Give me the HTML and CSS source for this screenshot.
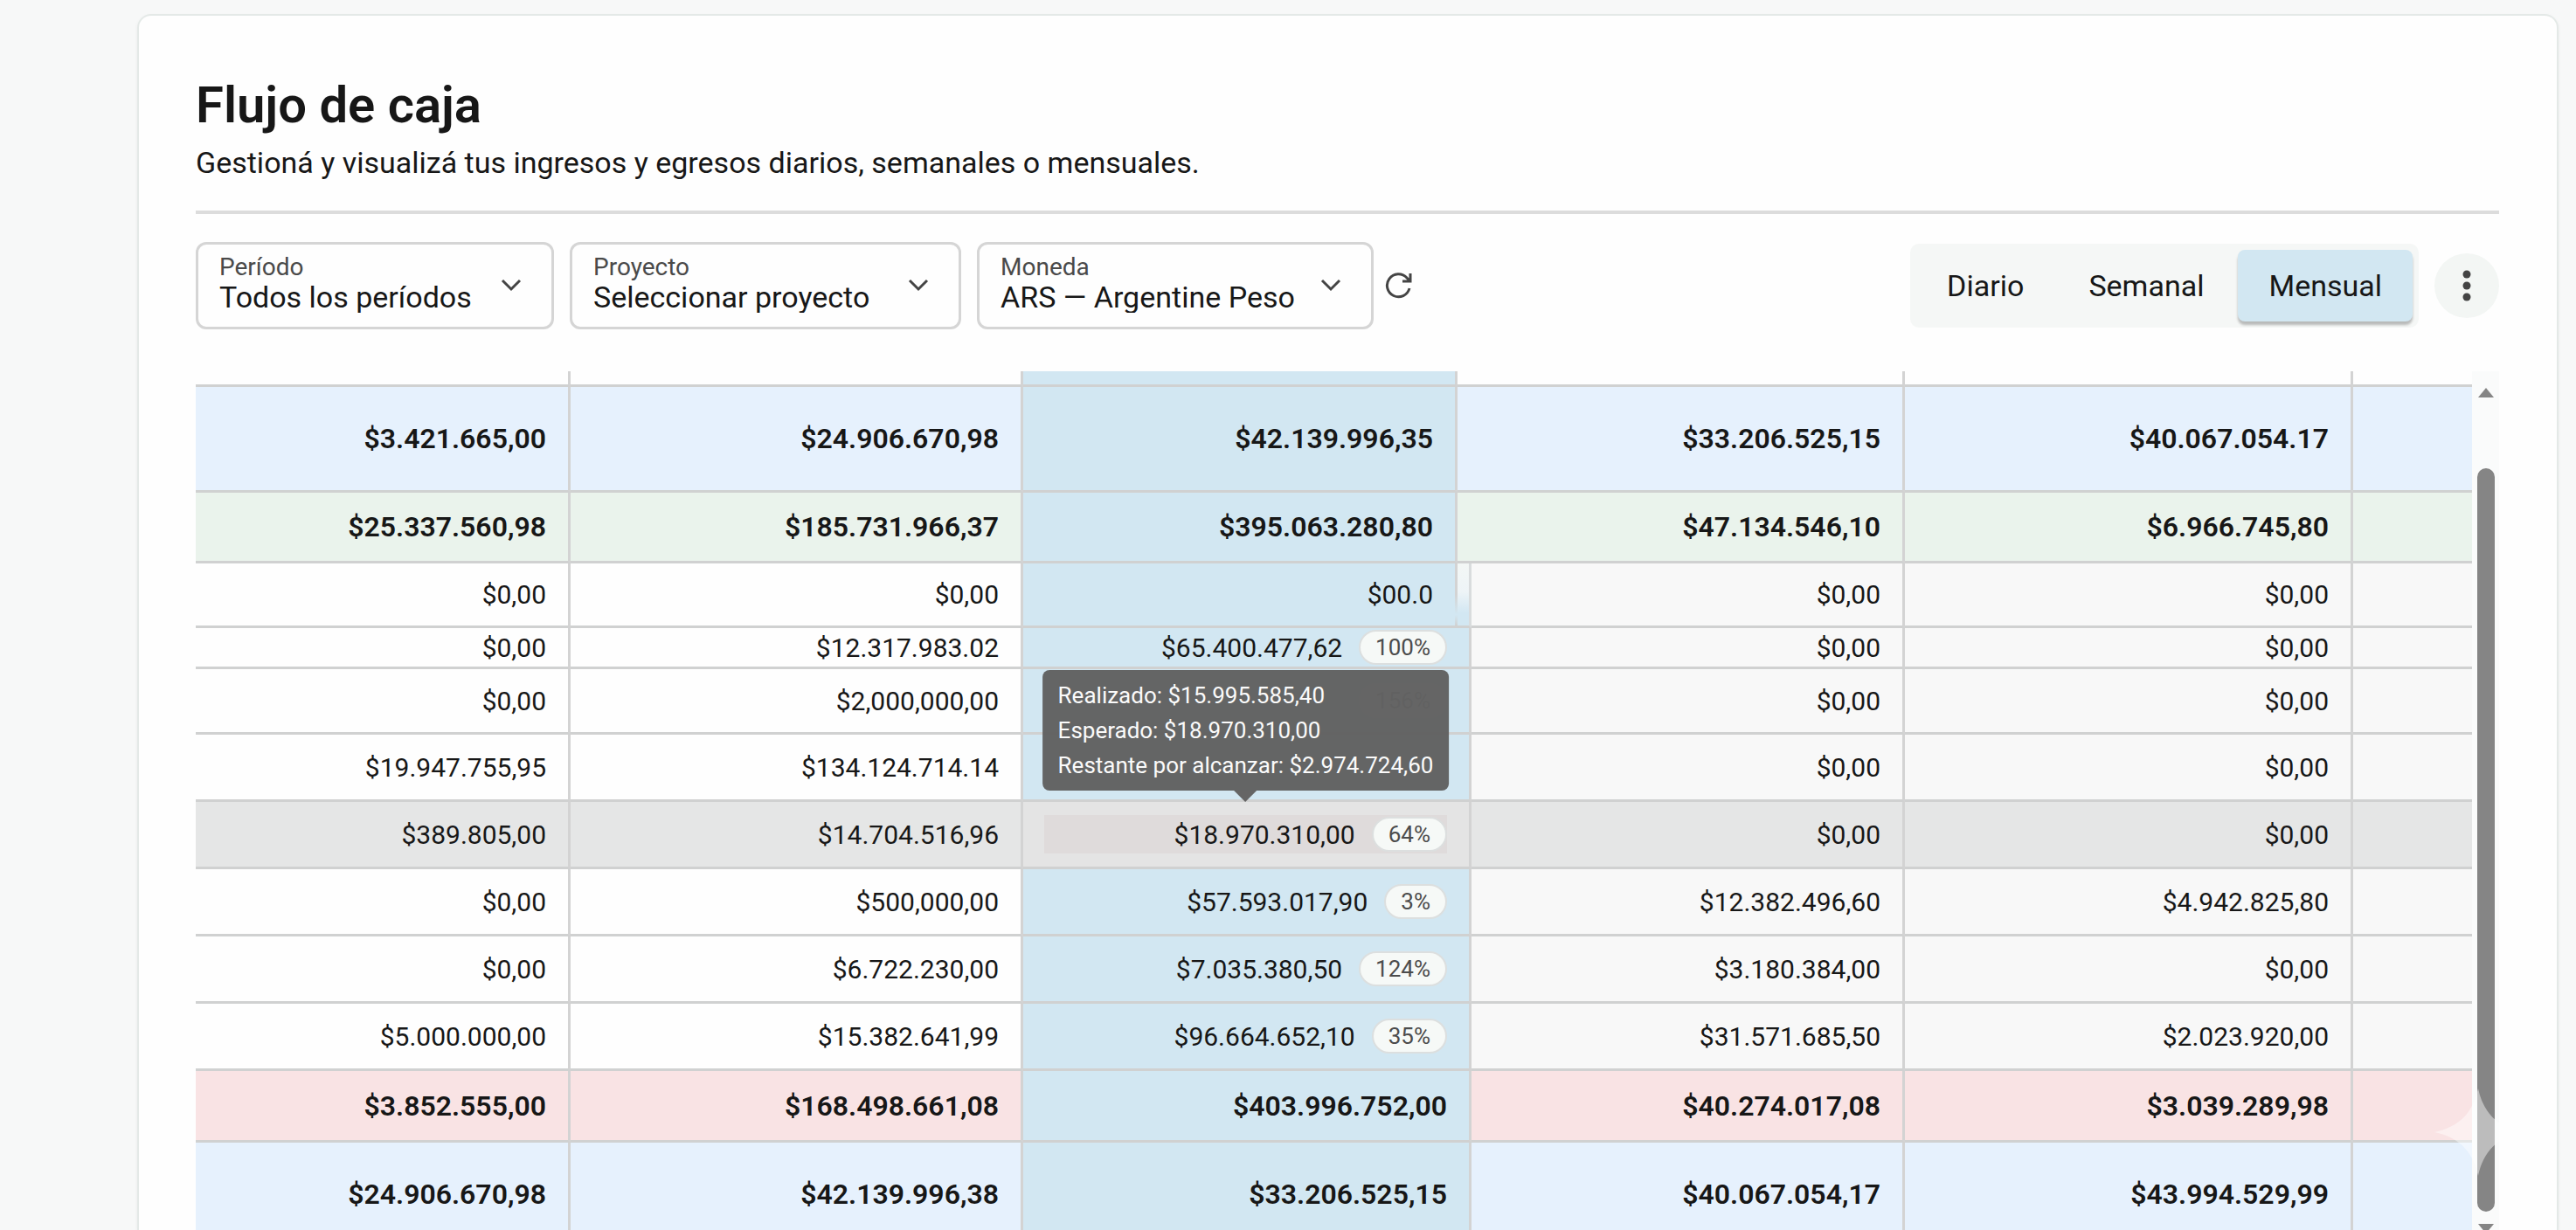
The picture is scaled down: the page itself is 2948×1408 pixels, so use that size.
FILE: index.html
```
<!DOCTYPE html>
<html lang="es">
<head>
  <meta charset="UTF-8">
  <meta name="viewport" content="width=device-width, initial-scale=1.0">
  <title>Flujo de caja</title>
  <link rel="stylesheet" href="styles.css">
</head>
<body>

  <main class="card">
    <!-- Header -->
    <header class="page-header">
      <h1>Flujo de caja</h1>
      <p>Gestioná y visualizá tus ingresos y egresos diarios, semanales o mensuales.</p>
    </header>

    <!-- Filters -->
    <div class="toolbar">
      <div class="filters">
        <div class="field field-period">
          <label for="period">Período</label>
          <select id="period"><option>Todos los períodos</option></select>
          <svg class="chevron" viewBox="0 0 24 16"><path d="M2 3l10 10L22 3"/></svg>
        </div>
        <div class="field field-project">
          <label for="project">Proyecto</label>
          <select id="project"><option>Seleccionar proyecto</option></select>
          <svg class="chevron" viewBox="0 0 24 16"><path d="M2 3l10 10L22 3"/></svg>
        </div>
        <div class="field field-currency">
          <label for="currency">Moneda</label>
          <select id="currency"><option>ARS — Argentine Peso</option></select>
          <svg class="chevron" viewBox="0 0 24 16"><path d="M2 3l10 10L22 3"/></svg>
        </div>
        <button class="refresh-btn" type="button" aria-label="Actualizar">
          <svg viewBox="0 0 32 32"><path d="M28 19a13 13 0 1 1-3-12l4 4M29 2v9h-9"/></svg>
        </button>
      </div>

      <div class="actions">
        <div class="segmented">
          <button type="button">Diario</button>
          <button type="button">Semanal</button>
          <button type="button" class="selected">Mensual</button>
        </div>
        <button class="more-btn" type="button" aria-label="Más opciones">
          <svg viewBox="0 0 12 40"><circle cx="6" cy="7" r="4.5"/><circle cx="6" cy="20" r="4.5"/><circle cx="6" cy="33" r="4.5"/></svg>
        </button>
      </div>
    </div>

    <!-- Cash flow table -->
    <div class="table-area">
      <table class="flow">
        <colgroup>
          <col class="c1"><col class="c2"><col class="c3"><col class="c-edge"><col class="c4"><col class="c5"><col class="c6">
        </colgroup>
        <tbody>
          <tr class="stub"><td></td><td></td><td class="current"></td><td colspan="2"></td><td></td><td></td></tr>
          <tr class="balance"><td>$3.421.665,00</td><td>$24.906.670,98</td><td class="current">$42.139.996,35</td><td colspan="2">$33.206.525,15</td><td>$40.067.054.17</td><td></td></tr>
          <tr class="income"><td>$25.337.560,98</td><td>$185.731.966,37</td><td class="current">$395.063.280,80</td><td colspan="2">$47.134.546,10</td><td>$6.966.745,80</td><td></td></tr>
          <tr class="first"><td>$0,00</td><td>$0,00</td><td class="current fade-line">$00.0</td><td class="edge"></td><td class="future">$0,00</td><td class="future">$0,00</td><td class="future"></td></tr>
          <tr class="short"><td>$0,00</td><td>$12.317.983.02</td><td class="current" colspan="2"><div class="amount">$65.400.477,62 <span class="badge">100%</span></div></td><td class="future">$0,00</td><td class="future">$0,00</td><td class="future"></td></tr>
          <tr class="compact"><td>$0,00</td><td>$2,000,000,00</td><td class="current" colspan="2"><div class="amount"><span class="badge">156%</span></div></td><td class="future">$0,00</td><td class="future">$0,00</td><td class="future"></td></tr>
          <tr class="item"><td>$19.947.755,95</td><td>$134.124.714.14</td><td class="current" colspan="2"></td><td class="future">$0,00</td><td class="future">$0,00</td><td class="future"></td></tr>
          <tr class="item hovered">
            <td>$389.805,00</td><td>$14.704.516,96</td>
            <td class="current" colspan="2">
              <div class="amount progress">$18.970.310,00 <span class="badge">64%</span>
                <div class="tooltip" role="tooltip">
                  <p>Realizado: $15.995.585,40</p>
                  <p>Esperado: $18.970.310,00</p>
                  <p>Restante por alcanzar: $2.974.724,60</p>
                </div>
              </div>
            </td>
            <td class="future">$0,00</td><td class="future">$0,00</td><td class="future"></td>
          </tr>
          <tr class="item"><td>$0,00</td><td>$500,000,00</td><td class="current" colspan="2"><div class="amount">$57.593.017,90 <span class="badge">3%</span></div></td><td class="future">$12.382.496,60</td><td class="future">$4.942.825,80</td><td class="future"></td></tr>
          <tr class="item"><td>$0,00</td><td>$6.722.230,00</td><td class="current" colspan="2"><div class="amount">$7.035.380,50 <span class="badge">124%</span></div></td><td class="future">$3.180.384,00</td><td class="future">$0,00</td><td class="future"></td></tr>
          <tr class="item"><td>$5.000.000,00</td><td>$15.382.641,99</td><td class="current" colspan="2"><div class="amount">$96.664.652,10 <span class="badge">35%</span></div></td><td class="future">$31.571.685,50</td><td class="future">$2.023.920,00</td><td class="future"></td></tr>
          <tr class="expense"><td>$3.852.555,00</td><td>$168.498.661,08</td><td class="current" colspan="2">$403.996.752,00</td><td>$40.274.017,08</td><td>$3.039.289,98</td><td></td></tr>
          <tr class="balance"><td>$24.906.670,98</td><td>$42.139.996,38</td><td class="current" colspan="2">$33.206.525,15</td><td>$40.067.054,17</td><td>$43.994.529,99</td><td></td></tr>
        </tbody>
      </table>

      <div class="scrollbar">
        <svg class="arrow" viewBox="0 0 20 12"><path d="M10 1l9 11H1z"/></svg>
        <div class="thumb"></div>
        <svg class="arrow" viewBox="0 0 20 12"><path d="M10 11L1 0h18z"/></svg>
      </div>

      <svg class="sparkle" viewBox="0 0 100 100"><path d="M50 0C56 28 72 44 100 50C72 56 56 72 50 100C44 72 28 56 0 50C28 44 44 28 50 0z"/></svg>
    </div>
  </main>

</body>
</html>
```
FILE: styles.css
```
* {
  box-sizing: border-box;
}

body {
  margin: 0;
  height: 100vh;
  overflow: hidden;
  padding: 16px 20px 0 157px;
  background: #f7f8f8;
  color: #171717;
  font-family: Roboto, "Liberation Sans", sans-serif;
  font-size: 30px;
}

button, select {
  font: inherit;
  color: inherit;
  border: none;
  background: none;
  padding: 0;
  cursor: pointer;
}

.card {
  display: flex;
  flex-direction: column;
  height: 100%;
  overflow: hidden;
  padding: 68px 66px 0 65px;
  background: #fefefe;
  border: 2px solid #e4e9e7;
  border-bottom: none;
  border-radius: 16px 16px 0 0;
  box-shadow: 0 2px 4px rgba(0, 0, 0, 0.06);
}

/* Header */
.page-header {
  padding-bottom: 33px;
  border-bottom: 4px solid #dcdcdc;
}

h1 {
  margin: 0;
  font-size: 58px;
  line-height: 68px;
  font-weight: 600;
}

.page-header p {
  margin: 0;
  padding-top: 10px;
  font-size: 34px;
  line-height: 44px;
}

/* Toolbar */
.toolbar {
  display: flex;
  justify-content: space-between;
  align-items: center;
  margin-top: 32px;
}

.filters, .actions {
  display: flex;
  align-items: center;
  gap: 18px;
}

.field {
  position: relative;
  height: 100px;
  padding: 10px 24px;
  border: 3px solid #d5d5d5;
  border-radius: 12px;
}

.field-period {
  width: 410px;
}

.field-project {
  width: 448px;
}

.field-currency {
  width: 454px;
}

.field label {
  display: block;
  font-size: 28px;
  line-height: 32px;
  color: #4a4a4a;
}

.field select {
  display: block;
  width: 100%;
  appearance: none;
  font-size: 34px;
  line-height: 36px;
}

.chevron {
  position: absolute;
  right: 34px;
  top: 38px;
  width: 24px;
  height: 16px;
  pointer-events: none;
}

.chevron path, .refresh-btn path {
  fill: none;
  stroke: #444;
  stroke-width: 3;
}

.refresh-btn {
  width: 32px;
  height: 32px;
  margin-left: -5px;
}

.refresh-btn svg {
  display: block;
}

.segmented {
  display: flex;
  gap: 4px;
  padding: 7px;
  border-radius: 10px;
  background: #f5f7f6;
}

.segmented button {
  height: 82px;
  padding: 0 35px;
  border-radius: 8px;
  font-size: 34px;
}

.segmented .selected {
  background: #d2e7f2;
  box-shadow: 0 4px 3px rgba(0, 0, 0, 0.25);
}

.more-btn {
  width: 74px;
  height: 74px;
  border-radius: 50%;
  background: #f3f6f4;
}

.more-btn svg {
  display: block;
  width: 12px;
  height: 40px;
  margin: 0 auto;
  fill: #444;
}

/* Table */
.table-area {
  position: relative;
  display: flex;
  flex: 1;
  min-height: 0;
  margin-top: 48px;
}

.flow {
  flex: 1;
  table-layout: fixed;
  border-collapse: separate;
  border-spacing: 0;
  align-self: flex-start;
}

.c1 { width: 429px; }
.c2 { width: 518px; }
.c3 { width: 497px; }
.c-edge { width: 16px; }
.c4 { width: 496px; }
.c5 { width: 513px; }

td {
  padding: 0 25px 0 24px;
  border-right: 3px solid #d3d3d3;
  border-bottom: 3px solid #d0d1d1;
  text-align: right;
  white-space: nowrap;
}

td:last-child {
  border-right: none;
}

.stub td { height: 18px; }
.balance td { height: 121px; background: #e6f1fd; }
.income td { height: 81px; background: #eaf3ec; }
.expense td { height: 82px; background: #f9e3e4; }
.first td { height: 74px; }
.short td { height: 47px; }
.compact td { height: 75px; }
.item td { height: 77px; }

.balance td, .income td, .expense td {
  font-size: 32px;
  font-weight: 600;
}

td.future {
  background: #f8f8f8;
}

.flow td.current {
  background: #d2e7f2;
}

.hovered td, .hovered td.future {
  background: #e5e6e6;
}

.flow .hovered td.current {
  background: #e4e4e4;
}

/* The current column widens below the totals */
td.edge {
  padding: 0;
  border-right-color: #d9dcdd;
  background: linear-gradient(#f3f7f5, #eef4f7 45%, #d2e7f2 80%);
}

td.fade-line {
  border-right: 3px solid;
  border-image: linear-gradient(#d3d3d3 50%, #d2e7f2 80%, #d0d1d1 97%) 3;
}

.amount {
  position: relative;
  display: flex;
  justify-content: flex-end;
  align-items: center;
  gap: 19px;
}

.badge {
  height: 40px;
  padding: 0 17px;
  border: 2px solid #dcdfdf;
  border-radius: 20px;
  background: #f6f9f7;
  color: #4c4c4c;
  font-size: 26px;
  line-height: 36px;
}

.progress {
  height: 44px;
  background: #dfdbdb;
}

.tooltip {
  position: absolute;
  bottom: 72px;
  left: 50%;
  z-index: 2;
  transform: translateX(-50%);
  padding: 9px 18px;
  border-radius: 8px;
  background: rgba(98, 98, 98, 0.98);
  color: #fafafa;
  text-align: left;
  font-size: 26px;
  line-height: 40px;
}

.tooltip p {
  margin: 0;
}

.tooltip::after {
  content: "";
  position: absolute;
  top: 100%;
  left: 50%;
  margin-left: -13px;
  border: 13px solid transparent;
  border-top-color: #656565;
  border-bottom: none;
}

/* Scrollbar */
.scrollbar {
  display: flex;
  flex-direction: column;
  align-items: center;
  width: 31px;
  padding-top: 18px;
  background: #fafbfb;
}

.arrow {
  flex: none;
  width: 20px;
  height: 12px;
  fill: #858585;
}

.thumb {
  flex: none;
  width: 20px;
  height: 851px;
  margin: 81px 0 14px;
  border-radius: 10px;
  background: #858585;
}

.sparkle {
  position: absolute;
  right: -26px;
  top: 821px;
  width: 100px;
  height: 100px;
  fill: rgba(255, 255, 255, 0.45);
}
```
